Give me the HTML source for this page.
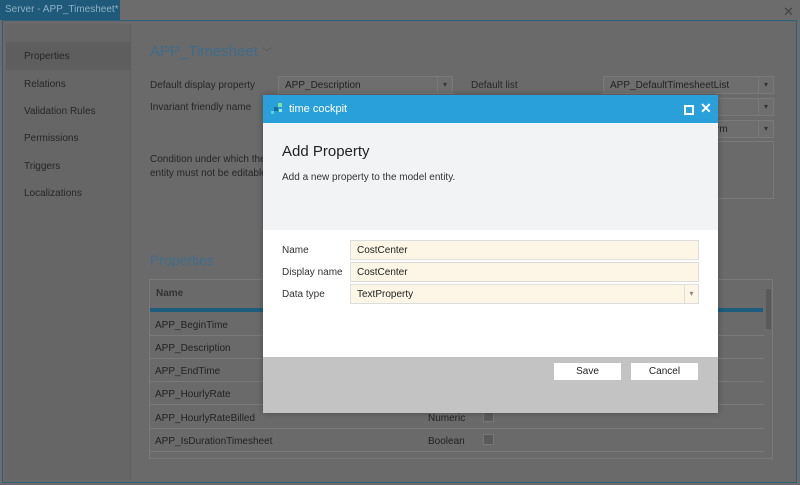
<!DOCTYPE html>
<html><head><style>
*{margin:0;padding:0;box-sizing:border-box}
body{width:800px;height:485px;background:#6c6c6c;font-family:"Liberation Sans",sans-serif;font-size:10px;color:#262626;position:relative;overflow:hidden}
.a{position:absolute;white-space:nowrap}
.cb{position:absolute;border:1px solid #7a7a7a;background:#6e6e6e;height:18px;padding:3px 6px;color:#222}
.cb:after{content:"▾";position:absolute;right:0;top:0;width:14px;height:16px;border-left:1px solid #7a7a7a;font-size:8px;text-align:center;line-height:16px;color:#333}
.row{position:absolute;left:150px;width:614px;height:23px;border-bottom:1px solid #7a7a7a;padding:7px 5px;color:#222}
.in{position:absolute;left:350px;width:349px;height:20px;background:#fdf6e6;border:1px solid #ddd;padding:4px 6px;color:#222}
.btn{position:absolute;top:363px;width:67px;height:17px;background:#fff;text-align:center;line-height:17px;color:#222}
</style></head><body>
<div class="a" style="left:0;top:0;width:120px;height:20px;background:#1f5a7a;color:#8fb0c4;font-size:10px;padding:4px 5px">Server - APP_Timesheet*</div>
<div class="a" style="left:783px;top:4px;color:#444;font-size:13px">✕</div>
<div class="a" style="left:2px;top:20px;width:795px;height:463px;border:1px solid #2d5f7c;background:#6a6a6a"></div>
<div class="a" style="left:5px;top:24px;width:126px;height:456px;background:#666;border-right:1px solid #5e5e5e"></div>
<div class="a" style="left:6px;top:42px;width:124px;height:28px;background:#5e5e5e"></div>
<div class="a" style="left:24px;top:51px">Properties</div>
<div class="a" style="left:24px;top:79px">Relations</div>
<div class="a" style="left:24px;top:106px">Validation Rules</div>
<div class="a" style="left:24px;top:133px">Permissions</div>
<div class="a" style="left:24px;top:161px">Triggers</div>
<div class="a" style="left:24px;top:188px">Localizations</div>
<div class="a" style="left:150px;top:43px;font-size:15px;color:#3e6c8b">APP_Timesheet <span style="font-size:10px;color:#555">﹀</span></div>
<div class="a" style="left:150px;top:80px">Default display property</div>
<div class="cb" style="left:278px;top:76px;width:175px">APP_Description</div>
<div class="a" style="left:150px;top:102px">Invariant friendly name</div>
<div class="a" style="left:471px;top:80px">Default list</div>
<div class="cb" style="left:603px;top:76px;width:171px">APP_DefaultTimesheetList</div>
<div class="cb" style="left:603px;top:98px;width:171px"></div>
<div class="cb" style="left:603px;top:120px;width:171px;padding-left:112px">rm</div>
<div class="a" style="left:603px;top:141px;width:171px;height:58px;border:1px solid #7a7a7a"></div>
<div class="a" style="left:150px;top:153px;line-height:14px">Condition under which the<br>entity must not be editable</div>
<div class="a" style="left:150px;top:252px;font-size:14px;color:#3e6c8b">Properties</div>
<div class="a" style="left:149px;top:279px;width:624px;height:180px;border:1px solid #7a7a7a"></div>
<div class="a" style="left:156px;top:288px;font-weight:bold;color:#333">Name</div>
<div class="a" style="left:150px;top:308px;width:613px;height:4px;background:#1d5d7e"></div>
<div class="a" style="left:766px;top:289px;width:5px;height:40px;background:#5a5a5a"></div>
<div class="row" style="top:313px">APP_BeginTime</div>
<div class="row" style="top:336px">APP_Description</div>
<div class="row" style="top:359px">APP_EndTime</div>
<div class="row" style="top:382px">APP_HourlyRate</div>
<div class="row" style="top:406px">APP_HourlyRateBilled<span class="a" style="left:278px;top:7px">Numeric</span><span class="a" style="left:333px;top:5px;width:11px;height:11px;background:#5a5a5a;border:1px solid #777"></span></div>
<div class="row" style="top:429px">APP_IsDurationTimesheet<span class="a" style="left:278px;top:7px">Boolean</span><span class="a" style="left:333px;top:5px;width:11px;height:11px;background:#5a5a5a;border:1px solid #777"></span></div>
<div class="a" style="left:263px;top:95px;width:455px;height:318px;background:#fff;box-shadow:0 0 6px rgba(0,0,0,.3)">
<div class="a" style="left:0;top:0;width:455px;height:28px;background:#2aa0db;color:#fff;font-size:11px;padding:8px 26px">time cockpit</div>
<svg class="a" style="left:7px;top:7px" width="14" height="14"><rect x="8" y="1" width="4" height="4" fill="#7fe0a0"/><rect x="4" y="5" width="4" height="4" fill="#1c6e9a"/><rect x="1" y="9" width="3" height="3" fill="#6cd"/><rect x="9" y="7" width="3" height="3" fill="#9ec"/></svg>
<div class="a" style="left:421px;top:10px;width:10px;height:10px;border:2px solid #fff"></div>
<div class="a" style="left:437px;top:5px;color:#fff;font-size:14px;font-weight:bold">✕</div>
<div class="a" style="left:0;top:28px;width:455px;height:107px;background:#f2f3f5"></div>
<div class="a" style="left:19px;top:48px;font-size:15px;color:#222">Add Property</div>
<div class="a" style="left:19px;top:77px;color:#333">Add a new property to the model entity.</div>
<div class="a" style="left:19px;top:150px;color:#333">Name</div>
<div class="a" style="left:19px;top:172px;color:#333">Display name</div>
<div class="a" style="left:19px;top:194px;color:#333">Data type</div>
<div class="a" style="left:0;top:262px;width:455px;height:56px;background:#c3c3c3"></div>
</div>
<div class="in" style="top:240px">CostCenter</div>
<div class="in" style="top:262px">CostCenter</div>
<div class="in" style="top:284px">TextProperty<span class="a" style="right:0;top:0;width:14px;height:18px;border-left:1px solid #ddd;font-size:8px;text-align:center;line-height:18px;color:#888">▾</span></div>
<div class="btn" style="left:554px">Save</div>
<div class="btn" style="left:631px">Cancel</div>
</body></html>
